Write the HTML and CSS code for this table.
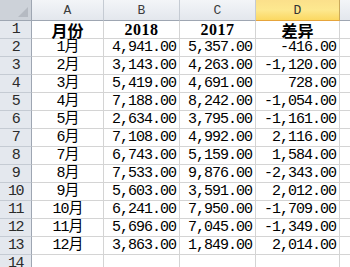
FILE: index.html
```html
<!DOCTYPE html>
<html>
<head>
<meta charset="utf-8">
<link rel="stylesheet" href="styles.css">
</head>
<body>
<div class="sheet">
  <div class="hd corner"><span class="tri"></span></div>
  <div class="hd col">A</div>
  <div class="hd col">B</div>
  <div class="hd col">C</div>
  <div class="hd col sel">D</div>
  <div class="hd col last"></div>

  <div class="rh">1</div><div class="c ctr b cjk">月份</div><div class="c ctr b yr">2018</div><div class="c ctr b yr">2017</div><div class="c ctr b cjk">差异</div><div class="c last"></div>
  <div class="rh">2</div><div class="c ctr">1月</div><div class="c num">4,941.00</div><div class="c num">5,357.00</div><div class="c num">-416.00</div><div class="c last"></div>
  <div class="rh">3</div><div class="c ctr">2月</div><div class="c num">3,143.00</div><div class="c num">4,263.00</div><div class="c num">-1,120.00</div><div class="c last"></div>
  <div class="rh">4</div><div class="c ctr">3月</div><div class="c num">5,419.00</div><div class="c num">4,691.00</div><div class="c num">728.00</div><div class="c last"></div>
  <div class="rh">5</div><div class="c ctr">4月</div><div class="c num">7,188.00</div><div class="c num">8,242.00</div><div class="c num">-1,054.00</div><div class="c last"></div>
  <div class="rh">6</div><div class="c ctr">5月</div><div class="c num">2,634.00</div><div class="c num">3,795.00</div><div class="c num">-1,161.00</div><div class="c last"></div>
  <div class="rh">7</div><div class="c ctr">6月</div><div class="c num">7,108.00</div><div class="c num">4,992.00</div><div class="c num">2,116.00</div><div class="c last"></div>
  <div class="rh">8</div><div class="c ctr">7月</div><div class="c num">6,743.00</div><div class="c num">5,159.00</div><div class="c num">1,584.00</div><div class="c last"></div>
  <div class="rh">9</div><div class="c ctr">8月</div><div class="c num">7,533.00</div><div class="c num">9,876.00</div><div class="c num">-2,343.00</div><div class="c last"></div>
  <div class="rh">10</div><div class="c ctr">9月</div><div class="c num">5,603.00</div><div class="c num">3,591.00</div><div class="c num">2,012.00</div><div class="c last"></div>
  <div class="rh">11</div><div class="c ctr">10月</div><div class="c num">6,241.00</div><div class="c num">7,950.00</div><div class="c num">-1,709.00</div><div class="c last"></div>
  <div class="rh">12</div><div class="c ctr">11月</div><div class="c num">5,696.00</div><div class="c num">7,045.00</div><div class="c num">-1,349.00</div><div class="c last"></div>
  <div class="rh">13</div><div class="c ctr">12月</div><div class="c num">3,863.00</div><div class="c num">1,849.00</div><div class="c num">2,014.00</div><div class="c last"></div>
  <div class="rh">14</div><div class="c"></div><div class="c"></div><div class="c"></div><div class="c"></div><div class="c last"></div>
</div>
</body>
</html>
```

FILE: styles.css
```css
html, body {
  margin: 0;
  padding: 0;
  background: #ffffff;
  overflow: hidden;
}
.sheet {
  display: grid;
  grid-template-columns: 32px 72px 76px 76px 84px 1fr;
  grid-template-rows: 21px;
  grid-auto-rows: 18px;
  width: 350px;
  font-family: "Liberation Mono", "Noto Sans CJK SC", monospace;
  font-size: 15px;
  line-height: 16px;
  color: #000;
}
.sheet > div {
  box-sizing: border-box;
  border-right: 1px solid #d4d4d4;
  border-bottom: 1px solid #d4d4d4;
  display: flex;
  align-items: center;
  white-space: nowrap;
}
.hd {
  background: linear-gradient(#f3f5f8, #e3e7ed);
  border-bottom: 1px solid #9ea6b2 !important;
  border-right: 1px solid #c5cbd3 !important;
  justify-content: center;
  font-size: 13px;
  color: #3c3c3c;
  padding-top: 2px;
}
.hd.corner {
  background: #cdd2d9;
  position: relative;
  border-right: 1px solid #9ea6b2 !important;
}
.tri {
  position: absolute;
  right: 3px;
  bottom: 3px;
  width: 0;
  height: 0;
  border-left: 10px solid transparent;
  border-bottom: 10px solid #b5bac2;
}
.hd.sel {
  background: linear-gradient(#fbe08b, #fde88f 50%, #fbd862);
  border-bottom: 1px solid #e6a43c !important;
  border-right: 1px solid #c9a95a !important;
  color: #333;
}
.hd.last {
  border-right: none !important;
}
.rh {
  background: #e4e8ee;
  border-right: 1px solid #9ea6b2 !important;
  border-bottom: 1px solid #c5cbd3 !important;
  justify-content: center;
  font-size: 15px;
  letter-spacing: -1.5px;
  color: #2b2b2b;
}
.c {
  letter-spacing: -1px;
}
.c.last {
  border-right: none;
}
.ctr {
  justify-content: center;
}
.num {
  justify-content: flex-end;
  padding-right: 3px;
}
.b {
  font-weight: bold;
}
.yr {
  font-family: "Liberation Serif", serif;
  font-size: 16px;
  letter-spacing: 0.5px;
}
.cjk {
  font-family: "Noto Sans CJK SC", sans-serif;
  font-size: 16px;
  letter-spacing: 0;
}
```
